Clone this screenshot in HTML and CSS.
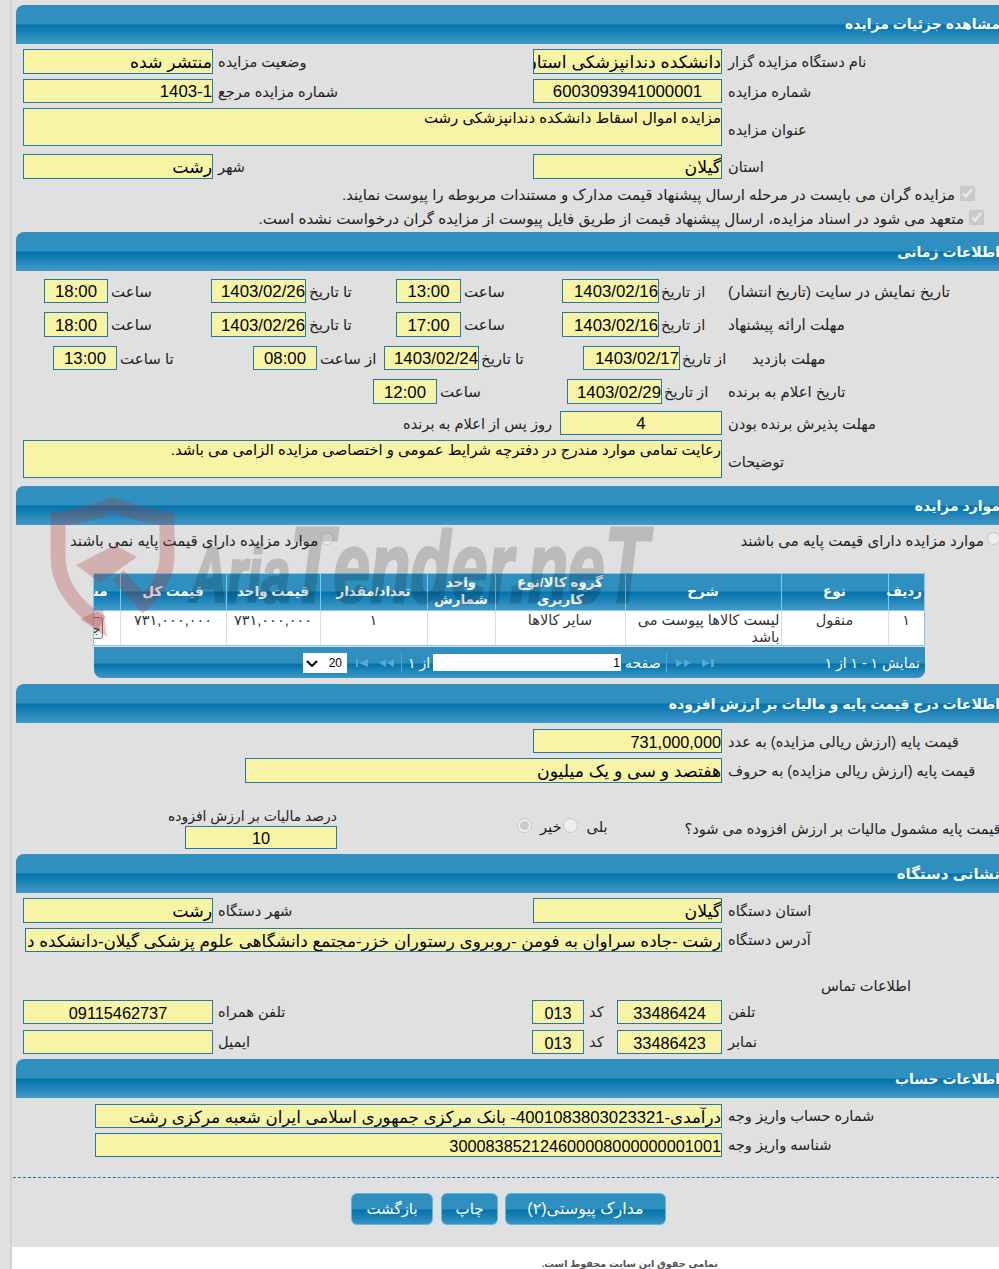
FILE: index.html
```html
<!DOCTYPE html>
<html lang="fa">
<head>
<meta charset="utf-8">
<title>مشاهده جزئیات مزایده</title>
<link rel="stylesheet" href="styles.css">
</head>
<body>
<div class="page">
  <div class="panel">
    <h2 class="head h1">مشاهده جزئیات مزایده</h2>
    <div class="row two r1"><input class="f fa" readonly value="منتشر شده"><label>وضعیت مزایده</label><input class="f fa" readonly value="دانشکده دندانپزشکی استان گیلان"><label>نام دستگاه مزایده گزار</label></div>
    <div class="row two r2"><input class="f" readonly value="1403-1"><label>شماره مزایده مرجع</label><input class="f c" readonly value="6003093941000001"><label>شماره مزایده</label></div>
    <div class="row wide r3"><div class="f area">مزایده اموال اسقاط دانشکده دندانپزشکی رشت</div><label>عنوان مزایده</label></div>
    <div class="row two r4"><input class="f fa" readonly value="رشت"><label>شهر</label><input class="f fa" readonly value="گیلان"><label>استان</label></div>
    <div class="check c1"><input type="checkbox" checked disabled><span>مزایده گران می بایست در مرحله ارسال پیشنهاد قیمت مدارک و مستندات مربوطه را پیوست نمایند.</span></div>
    <div class="check c2"><input type="checkbox" checked disabled><span>متعهد می شود در اسناد مزایده، ارسال پیشنهاد قیمت از طریق فایل پیوست از مزایده گران درخواست نشده است.</span></div>

    <h2 class="head h2">اطلاعات زمانی</h2>
    <div class="row time ta t1"><input class="f c" readonly value="18:00"><label>ساعت</label><input class="f" readonly value="1403/02/26"><label>تا تاریخ</label><input class="f c" readonly value="13:00"><label>ساعت</label><input class="f" readonly value="1403/02/16"><label>از تاریخ</label><label>تاریخ نمایش در سایت (تاریخ انتشار)</label></div>
    <div class="row time ta t2"><input class="f c" readonly value="18:00"><label>ساعت</label><input class="f" readonly value="1403/02/26"><label>تا تاریخ</label><input class="f c" readonly value="17:00"><label>ساعت</label><input class="f" readonly value="1403/02/16"><label>از تاریخ</label><label>مهلت ارائه پیشنهاد</label></div>
    <div class="row time tb t3"><input class="f c" readonly value="13:00"><label>تا ساعت</label><input class="f c" readonly value="08:00"><label>از ساعت</label><input class="f" readonly value="1403/02/24"><label>تا تاریخ</label><input class="f" readonly value="1403/02/17"><label>از تاریخ</label><label>مهلت بازدید</label></div>
    <div class="row time tc t4"><input class="f c" readonly value="12:00"><label>ساعت</label><input class="f" readonly value="1403/02/29"><label>از تاریخ</label><label>تاریخ اعلام به برنده</label></div>
    <div class="row time td t5"><label class="end">روز پس از اعلام به برنده</label><input class="f c" readonly value="4"><label>مهلت پذیرش برنده بودن</label></div>
    <div class="row wide t6"><div class="f area">رعایت تمامی موارد مندرج در دفترچه شرایط عمومی و اختصاصی مزایده الزامی می باشد.</div><label>توضیحات</label></div>

    <h2 class="head h3">موارد مزایده</h2>
    <div class="radios"><label class="rad"><input type="radio" disabled>موارد مزایده دارای قیمت پایه نمی باشند</label><label class="rad"><input type="radio" disabled>موارد مزایده دارای قیمت پایه می باشند</label></div>
    <div class="grid">
      <div class="clip">
        <table>
          <colgroup><col class="k1"><col class="k2"><col class="k3"><col class="k4"><col class="k5"><col class="k6"><col class="k7"><col class="k8"><col class="k9"></colgroup>
          <thead><tr><th>ردیف</th><th>نوع</th><th>شرح</th><th>گروه کالا/نوع کاربری</th><th>واحد شمارش</th><th>تعداد/مقدار</th><th>قیمت واحد</th><th>قیمت کل</th><th>مشاهده</th></tr></thead>
          <tbody><tr><td>۱</td><td>منقول</td><td class="desc">لیست کالاها پیوست می باشد</td><td>سایر کالاها</td><td></td><td>۱</td><td>۷۳۱,۰۰۰,۰۰۰</td><td>۷۳۱,۰۰۰,۰۰۰</td><td class="act"><button class="mini">جزئیات</button></td></tr></tbody>
        </table>
      </div>
      <div class="pager">
        <span class="sizebox">
          <select class="size"><option>20</option></select>
          <svg class="chev" width="12" height="7" viewBox="0 0 12 7"><path d="M1 1l5 5 5-5" fill="none" stroke="#000" stroke-width="2"/></svg>
        </span>
        <svg class="nav" width="40" height="12" viewBox="0 0 40 12"><path d="M0 2h2v8H0zM12 2v8L3 6zM30 2v8l-7-4zM38 2v8l-7-4z" fill="#5ba6cd"/></svg>
        <i class="sep"></i>
        <span class="of">از ۱</span>
        <input class="pg" readonly value="1">
        <span class="pl">صفحه</span>
        <i class="sep s2"></i>
        <svg class="nav n2" width="38" height="12" viewBox="0 0 38 12"><path d="M0 2v8l7-4zM8 2v8l7-4zM26 2v8l8-4zM35 2h3v8h-3z" fill="#5ba6cd"/></svg>
        <span class="info">نمایش ۱ - ۱ از ۱</span>
      </div>
    </div>

    <h2 class="head h4">اطلاعات درج قیمت پایه و مالیات بر ارزش افزوده</h2>
    <div class="row pa p1"><input class="f" readonly value="731,000,000"><label>قیمت پایه (ارزش ریالی مزایده) به عدد</label></div>
    <div class="row pb p2"><input class="f fa" readonly value="هفتصد و سی و یک میلیون"><label>قیمت پایه (ارزش ریالی مزایده) به حروف</label></div>
    <div class="vat">
      <div class="vatbox"><label class="vatl">درصد مالیات بر ارزش افزوده</label><input class="f c" readonly value="10"></div>
      <label class="rad yn"><input type="radio" disabled checked>خیر</label>
      <label class="rad yn"><input type="radio" disabled>بلی</label>
      <label class="vatq">قیمت پایه مشمول مالیات بر ارزش افزوده می شود؟</label>
    </div>

    <h2 class="head h5">نشانی دستگاه</h2>
    <div class="row two d1"><input class="f fa" readonly value="رشت"><label>شهر دستگاه</label><input class="f fa" readonly value="گیلان"><label>استان دستگاه</label></div>
    <div class="row addr d2"><input class="f fa" readonly value="رشت -جاده سراوان به فومن -روبروی رستوران خزر-مجتمع دانشگاهی علوم پزشکی گیلان-دانشکده دندانپزشکی"><label>آدرس دستگاه</label></div>
    <div class="contact">اطلاعات تماس</div>
    <div class="row tel d3"><input class="f c" readonly value="09115462737"><label>تلفن همراه</label><input class="f c" readonly value="013"><label>کد</label><input class="f c" readonly value="33486424"><label>تلفن</label></div>
    <div class="row tel d4"><input class="f c" readonly value=""><label>ایمیل</label><input class="f c" readonly value="013"><label>کد</label><input class="f c" readonly value="33486423"><label>نمابر</label></div>

    <h2 class="head h6">اطلاعات حساب</h2>
    <div class="row acc a1"><input class="f mix" readonly value="درآمدی-4001083803023321- بانک مرکزی جمهوری اسلامی ایران شعبه مرکزی رشت"><label>شماره حساب واریز وجه</label></div>
    <div class="row acc a2"><input class="f" readonly value="300083852124600008000000001001"><label>شناسه واریز وجه</label></div>
  </div>
  <div class="rule"></div>
  <div class="buttons"><button class="btn b1">بازگشت</button><button class="btn b2">چاپ</button><button class="btn b3">مدارک پیوستی(۲)</button></div>
  <footer class="foot">تمامی حقوق این سایت محفوظ است.</footer>
  <svg class="mark" width="620" height="160" viewBox="0 0 620 160">
    <g fill="none" stroke="#b03030" stroke-opacity=".27" stroke-width="15">
      <path d="M52 126 C22 108 8 84 8 60 L8 22 Q40 18 63 8 Q90 18 117 22 L117 60 C117 76 108 92 93 106 L68 78"/>
    </g>
    <path d="M26 68 L65 48 L87 60 L50 86 Z" fill="#b03030" fill-opacity=".27"/>
    <path d="M30 122 L57 140 L53 112 Z" fill="#b03030" fill-opacity=".27"/>
    <text class="marktext" x="140" y="105" textLength="458" lengthAdjust="spacingAndGlyphs"><tspan class="mA">Aria</tspan><tspan class="mT">T</tspan>ender.ne<tspan class="mT">T</tspan></text>
  </svg>
</div>
</body>
</html>
```
FILE: styles.css
```css
* { box-sizing: border-box; }
html, body { margin: 0; padding: 0; background: #fff; }
body { font-family: "Liberation Sans", "DejaVu Sans", sans-serif; color: #222; font-size: 14.6px; }
.page { position: relative; width: 999px; height: 1269px; overflow: hidden; background: #e0e0e0; }
.page::before { content: ""; position: absolute; left: 10px; top: 0; width: 2px; height: 1269px; background: #d0d0d0; }
.panel { margin-left: 16px; width: 1000px; padding-top: 5px; }
.head { margin: 0; height: 39px; padding: 10px 16px 0 0; direction: rtl; text-align: right; color: #fff; font-size: 14px; line-height: 20px; font-weight: bold; white-space: nowrap;
  border-radius: 8px 0 0 0;
  background: linear-gradient(#2f90bf 0, #2f90bf 19px, #0272ab 20px, #3f98c7 38px, #3f98c7 39px); }
.head.h1 { padding-top: 9px; }
.head.h5 { font-size: 15px; }
.row { display: grid; align-items: center; height: 25px; padding-left: 7px; }
.row label, .vat label { direction: rtl; text-align: left; padding-left: 5px; white-space: nowrap; font-size: 14.6px; line-height: 20px; }
.f { display: block; width: 100%; height: 100%; padding: 2px 0 0; margin: 0; border: 1px solid #2577a8; border-radius: 0; background: #f7f5a5; color: #000; font: 16.3px/20px "Liberation Sans", "DejaVu Sans", sans-serif; direction: rtl; text-align: right; outline: 0; }
.f.c { text-align: center; }
.f.fa { font-size: 17.3px; }
.addr .f.fa { font-size: 16.8px; }
.f.mix { font-size: 16.7px; }
.time .f, .r2 .f { font-size: 16.8px; }
.area { font-size: 14.9px; line-height: 18px; overflow: hidden; padding: 0; }
.two { grid-template-columns: 190px 320px 189px 1fr; }
.wide { grid-template-columns: 699px 1fr; }
.r1 { margin-top: 5px; }
.r2 { margin-top: 5px; height: 24px; }
.r2 label { padding-top: 2px; }
.r3 { margin-top: 5px; height: 38px; }
.two label:last-child, .wide label, .pa label, .pb label, .addr label, .tel label:last-child, .acc label { padding-left: 6px; }
.row.wide label { padding-top: 6px; }
.row.pa label { padding-top: 2px; }
.r4 { margin-top: 8px; }
.check { display: flex; direction: rtl; align-items: center; height: 20px; line-height: 20px; white-space: nowrap; font-size: 15.1px; }
.check input { margin: 0 0 4px 5px; width: 15px; height: 15px; }
.c1 { margin-top: 6px; padding-right: 41px; font-size: 15px; }
.c2 { margin-top: 4px; padding-right: 32px; }
.h2 { margin-top: 3px; }

.row.time label { font-size: 15px; padding-top: 2px; padding-left: 3px; }
.row.t2 label, .row.t4 label { padding-top: 1px; }
.ta { grid-template-columns: 64px 103px 95px 90px 65px 101px 97px 69px 1fr; padding-left: 28px; height: 24px; }
.tb { grid-template-columns: 64px 136px 64px 67px 95px 104px 97px 48px 1fr; padding-left: 37px; height: 24px; }
.tc { grid-template-columns: 64px 130px 95px 66px 1fr; padding-left: 357px; height: 25px; }
.td { grid-template-columns: 157px 162px 1fr; padding-left: 387px; height: 24px; }
.row.ta label:nth-child(8), .row.tc label:nth-child(4) { padding-left: 2px; font-size: 14.6px; }
.row.tb label:nth-child(6) { padding-left: 2px; }
.row.tb label:nth-child(8) { padding-left: 2px; font-size: 14.6px; }
.row.ta label:last-child { padding-left: 0; font-size: 15.2px; }
.row.tc label:last-child { padding-left: 0; font-size: 14.9px; }
.row.tb label:last-child { padding-left: 24px; }
.row.td .end { padding-left: 0; font-size: 14.6px; }
.row.td label:last-child { padding-left: 6px; font-size: 14.6px; }
.t1 { margin-top: 8px; }
.t2 { margin-top: 9px; height: 25px; }
.t3 { margin-top: 9px; }
.t4 { margin-top: 9px; }
.t5 { margin-top: 7px; }
.t6 { margin-top: 5px; height: 38px; }
.h3 { margin-top: 8px; }

.radios { display: flex; justify-content: space-between; direction: ltr; padding: 4px 0 0 54px; height: 30px; }
.rad { display: flex; direction: rtl; align-items: center; line-height: 20px; font-size: 15px; height: 24px; }
.rad input { margin: 0 0 6px 3px; width: 13px; height: 13px; }
.radios .rad:last-child { margin-right: 16px; }
.grid { margin: 18px 0 0 77px; width: 832px; }
.clip { overflow: hidden; width: 832px; height: 73px; border: 1px solid #8ec5e4; direction: rtl; background: #fff; }
table { border-collapse: collapse; table-layout: fixed; width: 864px; direction: rtl; }
.k1 { width: 36px; } .k2 { width: 107px; } .k3 { width: 156px; } .k4 { width: 130px; } .k5 { width: 68px; } .k6 { width: 107px; } .k7 { width: 94px; } .k8 { width: 106px; } .k9 { width: 60px; }
th { height: 35px; padding: 0 2px 2px; color: #fff; font-size: 13.5px; line-height: 17px; font-weight: bold; border-left: 1px solid #7ecbee; border-bottom: 1px solid #7ecbee; background: linear-gradient(#2f90bf 0, #2f90bf 17px, #0272ab 18px, #3f98c7 35px); }
th:last-child { text-align: right; padding-right: 12px; }
td { height: 35px; padding: 1px 3px 0; vertical-align: top; text-align: center; font-size: 14.5px; line-height: 17px; border-left: 1px solid #ddd; background: #fff; color: #333; }
td.desc { text-align: right; padding-right: 1px; }
td.act { text-align: right; padding: 6px 17px 0 0; }
.mini { display: block; width: 44px; height: 22px; padding: 0 1px 0 0; border: 1px solid #777; border-radius: 3px; background: #eee; font: 13px "DejaVu Sans", sans-serif; color: #222; direction: rtl; text-align: right; overflow: hidden; }
.pager { display: flex; align-items: center; direction: ltr; height: 31px; margin: 1px 0 0 1px; width: 831px; padding-left: 209px; color: #fff; font-size: 14px; border-radius: 0 0 8px 8px; background: linear-gradient(#2f90bf 0, #2f90bf 16px, #0272ab 17px, #3f98c7 31px); }
.sizebox { position: relative; display: block; width: 44px; height: 20px; flex: none; }
.size { display: block; width: 44px; height: 20px; padding: 0 5px 0 0; border: 0; background: #fff; font: 12px "Liberation Sans", sans-serif; color: #000; border-radius: 0; direction: rtl; outline: 0; appearance: none; -webkit-appearance: none; }
.chev { position: absolute; left: 3px; top: 7px; }
.nav { margin-left: 9px; flex: none; }
.sep { display: block; width: 1px; height: 21px; background: #5ba6cd; margin-left: 5px; }
.of { direction: rtl; text-align: left; margin-left: 6px; width: 25px; }
.pg { width: 188px; height: 17px; border: 0; padding: 0 1px; direction: rtl; background: #fff; font: 12px "Liberation Sans", sans-serif; }
.pl { direction: rtl; margin-left: 4px; }
.s2 { margin-left: 5px; }
.n2 { margin-left: 9px; }
.info { direction: rtl; margin-left: auto; margin-right: 5px; }
.h4 { margin-top: 6px; }

.pa { grid-template-columns: 189px 1fr; padding-left: 517px; height: 24px; margin-top: 6px; }
.pb { grid-template-columns: 477px 1fr; padding-left: 229px; margin-top: 5px; }
.vat { display: flex; direction: ltr; align-items: flex-end; height: 66px; padding-left: 169px; }
.vat .vatbox { width: 152px; flex: none; }
.vatbox .f { height: 23px; }
.vat .vatl { display: block; padding-left: 0; margin: 0 0 1px -16px; line-height: 18px; font-size: 13.9px; }
.vat .yn { flex-direction: row-reverse; margin-bottom: 10px; padding-left: 0; }
.rad.yn input { margin: 0 8px 4px 0; width: 15px; height: 15px; }
.yn:nth-of-type(1) { margin-left: 180px; }
.yn + .yn { margin-left: 2px; }
.vat .vatq { padding-left: 0; margin: 0 0 10px 77px; flex: none; }
.h5 { margin-top: 5px; }
.d1 { margin-top: 5px; }
.addr { grid-template-columns: 697px 1fr; padding-left: 9px; height: 23px; margin-top: 5px; }
.contact { direction: rtl; text-align: right; margin-top: 25px; padding-right: 104px; width: 999px; line-height: 20px; }
.tel { grid-template-columns: 190px 319px 52px 33px 105px 1fr; height: 24px; }
.d3 { margin-top: 4px; }
.d4 { margin-top: 6px; }
.h6 { margin-top: 5px; }
.acc { grid-template-columns: 627px 1fr; padding-left: 79px; height: 24px; }
.a1 { margin-top: 6px; }
.a2 { margin-top: 5px; }
.rule { margin: 20px 0 0 13px; border-top: 1px dashed #2577a8; }
.buttons { display: flex; direction: ltr; gap: 8px; margin: 15px 0 0 351px; }
.btn { height: 32px; border: 1px solid #5cb6df; border-radius: 6px; color: #fff; font: 15px/20px "Liberation Sans", "DejaVu Sans", sans-serif; padding: 0; background: linear-gradient(#2f90bf 0, #2f90bf 15px, #0272ab 16px, #3f98c7 32px); }
.b1 { width: 82px; } .b2 { width: 57px; } .b3 { width: 161px; margin-left: -1px; font-size: 16px; }
.foot { position: relative; margin: 22px 0 0 12px; height: 22px; padding: 10px 281px 0 0; background: #fff; direction: rtl; text-align: right; white-space: nowrap; font-size: 9.7px; line-height: 13px; font-weight: bold; color: #555; }
.mark { position: absolute; left: 50px; top: 497px; pointer-events: none; }
.marktext { font: italic bold 100px "Liberation Sans Narrow", "Liberation Sans", sans-serif; fill: #000; stroke: #000; stroke-width: 3px; opacity: .16; }
.mA { font-size: 78px; }
.mT { font-size: 107px; }
```
